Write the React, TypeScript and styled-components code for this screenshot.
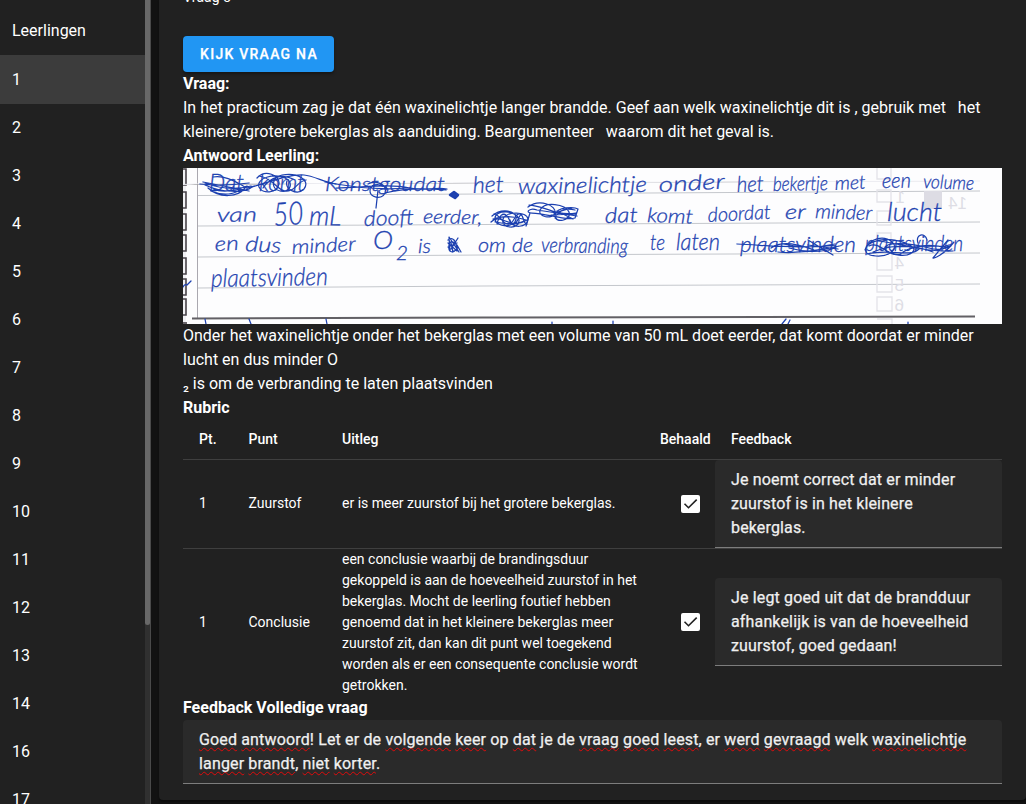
import React from "react";
import styled, { createGlobalStyle } from "styled-components";

const GlobalStyle = createGlobalStyle`
  * { box-sizing: border-box; }
  html, body { margin: 0; height: 100%; overflow: hidden; background: #121212; }
  body { font-family: Roboto, "Liberation Sans", sans-serif; font-size: 16px; line-height: 24px; color: #fff; }
`;

const Page = styled.div`
  display: flex;
  height: 804px;
  width: 1026px;
  overflow: hidden;
`;

const Sidebar = styled.aside`
  display: flex;
  width: 151px;
  flex: none;
  background: #212121;
  border-right: 1px solid #4a4a4a;
`;

const StudentList = styled.nav`
  flex: 1;
  overflow: hidden;
`;

const ListTitle = styled.div`
  height: 55px;
  padding: 19px 12px 0;
`;

const Student = styled.div<{ $active?: boolean }>`
  display: flex;
  align-items: center;
  height: ${(p) => (p.$active ? 49 : 48)}px;
  padding: 0 12px;
  background: ${(p) => (p.$active ? "#3c3c3c" : "transparent")};
`;

const ScrollTrack = styled.div`
  width: 5px;
  background: #303030;
`;

const ScrollThumb = styled.div`
  height: 625px;
  background: #686868;
  border-radius: 0 0 3px 3px;
`;

const Main = styled.main`
  flex: 1;
  min-width: 0;
  padding-left: 8px;
`;

const Card = styled.section`
  display: flex;
  flex-direction: column;
  align-items: flex-start;
  height: 800px;
  padding: 0 24px;
  background: #212121;
  border-radius: 0 0 4px 4px;
  box-shadow: 0 2px 2px rgba(0, 0, 0, 0.4);
`;

const CardTitle = styled.div`
  height: 36px;
  font-size: 14px;
  line-height: 20px;
  letter-spacing: 0.1px;
  margin-top: -13px;
  margin-bottom: 13px;
`;

const CheckButton = styled.button`
  flex: none;
  width: 151px;
  height: 36px;
  padding: 0 0 0 1px;
  border: 0;
  border-radius: 4px;
  background: #2196f3;
  color: #fff;
  font: 500 14px Roboto, sans-serif;
  letter-spacing: 1.25px;
  text-transform: uppercase;
  -webkit-text-stroke: 0.25px #fff;
  box-shadow: 0 2px 3px rgba(0, 0, 0, 0.35);
`;

const Label = styled.div`
  font-weight: 700;
  height: 24px;
  flex: none;
`;

const Paragraph = styled.div`
  white-space: pre;
  flex: none;
`;

const Subscript = styled.span`
  font-size: 16px;
  line-height: 0;
`;

const Scan = styled.svg`
  display: block;
  flex: none;
  background: #fdfdfe;
`;

const Rubric = styled.table`
  width: 819px;
  flex: none;
  table-layout: fixed;
  border-collapse: separate;
  border-spacing: 0;
  font-size: 14px;
  line-height: 21px;
`;

const HeadCell = styled.th<{ $w: number }>`
  width: ${(p) => p.$w}px;
  height: 40px;
  padding: 0 0 0 16px;
  text-align: left;
  font-weight: 500;
  white-space: nowrap;
  border-bottom: 1px solid #3f3f3f;
`;

const Cell = styled.td<{ $last?: boolean; $flush?: boolean; $lift?: boolean }>`
  padding: ${(p) => (p.$flush ? "0" : "0 0 0 16px")};
  padding-bottom: ${(p) => (p.$lift ? "2px" : "0")};
  border-bottom: ${(p) => (p.$last ? "0" : "1px solid #3f3f3f")};
  white-space: pre;
  vertical-align: middle;
`;

const CheckMark = styled.svg`
  display: block;
  margin: 1px 0 0 21px;
`;

const Field = styled.div`
  width: 100%;
  flex: none;
  padding: 8px 16px 7px;
  background: #2a2a2a;
  border-bottom: 1px solid #7d7d7d;
  border-radius: 4px 4px 0 0;
  color: #f0f0f0;
  font-size: 16px;
  line-height: 24px;
  letter-spacing: 0.15px;
  white-space: pre;
  -webkit-text-stroke: 0.25px #f0f0f0;
`;

const Misspelled = styled.span`
  text-decoration: underline wavy #e00b0b 1px;
  text-decoration-skip-ink: none;
  text-underline-offset: 2px;
`;

const Ink = styled.text`
  font-family: Lato, sans-serif;
  font-style: italic;
  font-weight: 300;
  fill: #1f43b0;
`;

type Word = [text: string, x: number, y: number, width: number, size: number, tilt?: number];

const words: Word[] = [
  ["Dat", 26, 23, 35, 24],
  ["komt", 76, 23, 46, 23],
  ["Konstgoudat", 142, 23, 120, 20],
  ["het", 290, 25, 31, 23, -2],
  ["waxinelichtje", 335, 26, 129, 22, -1],
  ["onder", 476, 24, 66, 21, -3],
  ["het", 554, 24, 27, 22, -2],
  ["bekertje", 590, 23, 55, 20, -1],
  ["met", 652, 22, 31, 19, -3],
  ["een", 699, 20, 29, 21, -1],
  ["volume", 740, 20, 51, 19, 2],
  ["van", 34, 54, 40, 20, -1],
  ["50", 91, 58, 30, 32, -4],
  ["mL", 126, 57, 32, 27, 1],
  ["dooft", 181, 58, 50, 21, -2],
  ["eerder,", 240, 55, 59, 19, 1],
  ["dat", 422, 55, 33, 21, -2],
  ["komt", 464, 54, 46, 20, 2],
  ["doordat", 525, 54, 63, 20, -3],
  ["er", 602, 51, 21, 20, -1],
  ["minder", 632, 50, 57, 20, 2],
  ["lucht", 704, 53, 55, 25],
  ["en", 32, 83, 24, 20, -3],
  ["dus", 62, 83, 36, 21, 3],
  ["minder", 109, 86, 64, 20, -3],
  ["O", 190, 81, 20, 25],
  ["2", 213, 92, 12, 19],
  ["is", 235, 85, 13, 20],
  ["om", 295, 84, 28, 20],
  ["de", 329, 84, 21, 20],
  ["verbranding", 358, 84, 87, 21, 1],
  ["te", 467, 82, 15, 21],
  ["laten", 493, 82, 44, 23],
  ["plaatsvinden", 557, 84, 116, 21],
  ["plaatsvinden", 682, 83, 98, 21],
  ["plaatsvinden", 28, 119, 117, 25, -1],
];

const strikes = [
  "M17 16c18 2 34 1 49-1M22 17c17 8 40 8 47 2M25 20c12 11 30 9 37 0M30 9c14-2 24 6 34 11M28 23c12 5 25 4 30-3M20 14l46 9M22 15c16 6 30 7 46 3M30 21c10 4 22 2 34-3",
  "M74 10c8-9 23-3 22 6c-2 10-17 10-20 3c-3-9 15-14 26-9c9 4 6 15-5 13c-10-2-8-14 2-16c15-3 29 5 22 14c-7 7-20 0-17-8M64 20c20-4 38-14 57-13c10 1 20 7 32 9M76 8c14 2 18 14 26 15c11 1 12-10 21-11M80 20c8-12 20-14 30-9",
  "M142 14c25 5 58 8 84 6M153 20c25 0 52-5 74 0c14 3 26-1 37 1M185 16c8-5 20 1 17 9c-3 7-16 5-15-3c1-8 16-6 18 0M195 22l-2 18M202 25c12-3 28-6 61-3",
  "M309 48c9-8 25-6 24 3s-20 9-21 0c-1-10 23-9 24 1s-19 9-16-1c3-8 24-8 25 0c0 9-17 10-18 1M308 54c10-10 19 9 36-2M311 46c8 2 8 10 14 10c7 0 6-11 12-10c5 2 2 9 7 10M314 56c2-9 6-11 9-9c4 2 3 10 8 9c5-2 4-9 8-10M310 51c12-4 22-3 33 1M312 54c10 2 20 3 29-1",
  "M345 39c12-9 29-1 27 6s-18 4-15-3c5-9 25-6 29 2c3 9-15 12-14 3c2-9 20-8 23-6l-3 9c-12 3-28-5-43-5c-8 0-2-6 5-3l40 6M371 45l18-5M347 45l-4 13M346 37c14 0 24 11 47 8M372 50c4-9 12-10 20-8M374 43l16 8M368 47l25-1",
  "M265 72c5-4 8 1 9 9c-5 5-9 3-8-4c1-6 7-3 9 3M267 83l-1-14l10 15M268 81l7-11M270 84l-2-9M265 75l9 8M265 79l9-4M278 84l-4-7",
  "M554 76c27 1 52 5 91 2c6-1 10 0 7 2c-14 5-32 4-46 0M588 80c13-9 31-2 43 2M625 72l25 15M595 84c18 2 39-2 58-5M625 77l30 4M600 76c14 3 30 5 52 0",
  "M682 82c4-12 19-15 27-8s-4 15-16 14c-13-1-14-9-3-14c16-7 41 2 41 8c-4 9-27 5-29-1c-2-8 26-6 44-1c16 5 25-5 25-6c-10 13-21 17-21 16l15-18M695 73c22 2 43 11 75 10M684 86c22-6 43 4 52-5M735 75c-3-9 7-11 9-3M702 79l66-1M686 78c10-6 20 12 32 8M690 84c18-8 40-8 60 0M720 84c14-8 30-8 45-4",
];

function HandwrittenAnswer() {
  return (
    <Scan width="819" height="156" viewBox="0 0 819 156" role="img" aria-label="Antwoord">
      <rect width="819" height="156" fill="#fdfdfe" />
      <path d="M0 0h3v156h-3z" fill="#f1f1f4" />
      {[1, 24, 46, 67, 90, 111, 131].map((y) => (
        <path key={y} d={`M0 ${y}h3v16h-3`} fill="none" stroke="#484349" strokeWidth="1.6" />
      ))}
      <path d="M0 155h4" stroke="#484349" strokeWidth="1.6" />
      <path d="M14.5 0V150" stroke="#aaa8af" />
      <path d="M0 16.5L12 16L797 13" stroke="#efeff4" />
      <g stroke="#c4c7cc" fill="none">
        <path d="M15 27.5L300 26L797 23" />
        <path d="M15 58L300 56.5L797 54" />
        <path d="M15 89L300 87L797 85" />
        <path d="M15 120L300 118L797 116" />
      </g>
      <path d="M9 150.5L300 149.5L792 148.5" stroke="#626065" strokeWidth="2" />
      <g fill="none" stroke="#e4e3e9" strokeWidth="1.3">
        <path d="M694 0v11h14V0M694 22h14v12h-14zM694 43h14v14h-14zM694 65h14v14h-14zM694 85h15v17h-15zM694 108h15v16h-15zM694 129h15v14h-15zM694 151h15v5" />
      </g>
      <rect x="741" y="23" width="18" height="18" fill="#dddce4" />
      <g fill="#deddE5" fontFamily="Liberation Sans, sans-serif" fontSize="17">
        <text transform="translate(784 41) scale(-1 1)">14</text>
        <text transform="translate(722 35) scale(-1 1)">1</text>
        <text transform="translate(721 101) scale(-1 1)">4</text>
        <text transform="translate(721 123) scale(-1 1)">5</text>
        <text transform="translate(721 143) scale(-1 1)">6</text>
      </g>
      {words.map(([text, x, y, width, size, tilt = 0], i) => (
        <Ink
          key={i}
          transform={`translate(${x} ${y}) rotate(${tilt})`}
          fontSize={size}
          textLength={width}
          lengthAdjust="spacingAndGlyphs"
          stroke="#1f43b0"
          strokeWidth="0.3"
        >
          {text}
        </Ink>
      ))}
      <g fill="none" stroke="#1c40b0" strokeWidth="1.25" strokeLinecap="round" strokeLinejoin="round">
        {strikes.map((d) => (
          <path key={d} d={d} />
        ))}
        <path d="M267 27l4-3l4 3l-3 3z" fill="#2145b0" strokeWidth="2.5" />
        <path d="M0 119c2-4 3-2 4-2l4-4M23 156l-1-5M66 151l2 5M143 151l1 5M369 154v2M430 153v3M603 151l-4 5M607 152l-2 4M725 154v2" />
      </g>
    </Scan>
  );
}

function Checkbox() {
  return (
    <CheckMark width="19" height="18" viewBox="0 0 19 18" role="img" aria-label="Behaald">
      <rect width="19" height="18" rx="2" fill="#fff" />
      <path d="M3.5 8.8L7.5 12.7L15.7 4.6" fill="none" stroke="#212121" strokeWidth="1.6" />
    </CheckMark>
  );
}

const rubric = [
  {
    point: "Zuurstof",
    explanation: "er is meer zuurstof bij het grotere bekerglas.",
    feedback: "Je noemt correct dat er minder\nzuurstof is in het kleinere\nbekerglas.",
  },
  {
    point: "Conclusie",
    explanation:
      "een conclusie waarbij de brandingsduur\ngekoppeld is aan de hoeveelheid zuurstof in het\nbekerglas. Mocht de leerling foutief hebben\ngenoemd dat in het kleinere bekerglas meer\nzuurstof zit, dan kan dit punt wel toegekend\nworden als er een consequente conclusie wordt\ngetrokken.",
    feedback: "Je legt goed uit dat de brandduur\nafhankelijk is van de hoeveelheid\nzuurstof, goed gedaan!",
  },
];

const students = [1, 2, 3, 4, 5, 6, 7, 8, 9, 10, 11, 12, 13, 14, 16, 17];

/* Words between asterisks are flagged by the spelling checker. */
const overallFeedback =
  "*Goed* *antwoord*! Let er de *volgende* *keer* op *dat* je de *vraag* *goed* *leest*, er *werd* *gevraagd* welk *waxinelichtje*\n*langer* *brandt*, *niet* *korter*.";

export default function App() {
  return (
    <Page>
      <GlobalStyle />
      <Sidebar>
        <StudentList>
          <ListTitle>Leerlingen</ListTitle>
          {students.map((n) => (
            <Student key={n} $active={n === 1}>
              {n}
            </Student>
          ))}
        </StudentList>
        <ScrollTrack>
          <ScrollThumb />
        </ScrollTrack>
      </Sidebar>
      <Main>
        <Card>
          <CardTitle>Vraag 3</CardTitle>
          <CheckButton>Kijk vraag na</CheckButton>
          <Label>Vraag:</Label>
          <Paragraph>
            {"In het practicum zag je dat één waxinelichtje langer brandde. Geef aan welk waxinelichtje dit is , gebruik met   het\nkleinere/grotere bekerglas als aanduiding. Beargumenteer   waarom dit het geval is."}
          </Paragraph>
          <Label>Antwoord Leerling:</Label>
          <HandwrittenAnswer />
          <Paragraph>
            {"Onder het waxinelichtje onder het bekerglas met een volume van 50 mL doet eerder, dat komt doordat er minder\nlucht en dus minder O\n"}
            <Subscript>₂</Subscript>
            {" is om de verbranding te laten plaatsvinden"}
          </Paragraph>
          <Label>Rubric</Label>
          <Rubric>
            <thead>
              <tr>
                <HeadCell $w={49.5}>Pt.</HeadCell>
                <HeadCell $w={93.5}>Punt</HeadCell>
                <HeadCell $w={318}>Uitleg</HeadCell>
                <HeadCell $w={71}>Behaald</HeadCell>
                <HeadCell $w={287}>Feedback</HeadCell>
              </tr>
            </thead>
            <tbody>
              {rubric.map((row, i) => {
                const last = i === rubric.length - 1;
                return (
                  <tr key={row.point}>
                    <Cell $last={last} $lift={!last}>1</Cell>
                    <Cell $last={last} $lift={!last}>{row.point}</Cell>
                    <Cell $last={last} $lift={!last}>{row.explanation}</Cell>
                    <Cell $last={last} $lift>
                      <Checkbox />
                    </Cell>
                    <Cell $last={last} $flush $lift={last}>
                      <Field>{row.feedback}</Field>
                    </Cell>
                  </tr>
                );
              })}
            </tbody>
          </Rubric>
          <Label>Feedback Volledige vraag</Label>
          <Field>
            {overallFeedback
              .split("*")
              .map((part, i) => (i % 2 ? <Misspelled key={i}>{part}</Misspelled> : part))}
          </Field>
        </Card>
      </Main>
    </Page>
  );
}
